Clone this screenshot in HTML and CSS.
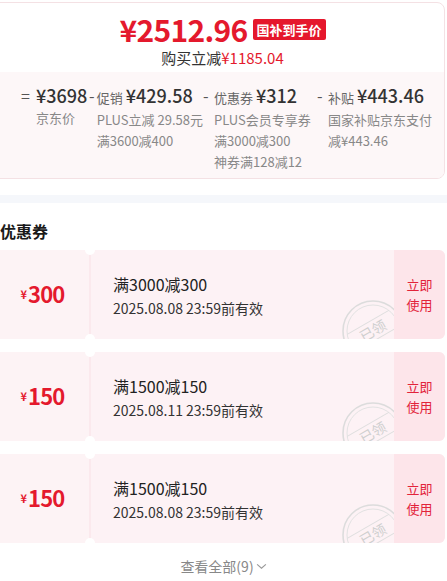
FILE: index.html
```html
<!DOCTYPE html>
<html lang="zh-CN">
<head>
    <meta charset="UTF-8">
    <meta name="viewport" content="width=device-width, initial-scale=1.0">
    <title>国补到手价</title>
    <link rel="stylesheet" href="styles.css">
</head>
<body>

    <div class="price-card">
        <div class="price-top">
            <div class="final-line">
                <span class="final-price">¥2512.96</span>
                <span class="final-tag">国补到手价</span>
            </div>
            <div class="save-line">购买立减<span class="red">¥1185.04</span></div>
        </div>

        <div class="breakdown">
            <div class="col col-1">
                <span class="sign">=</span>
                <div class="col-body">
                    <div class="head"><span class="amount">¥3698</span></div>
                    <div class="sub">京东价</div>
                </div>
            </div>
            <div class="col col-2">
                <span class="sign">-</span>
                <div class="col-body">
                    <div class="head"><span class="label">促销</span><span class="amount">¥429.58</span></div>
                    <div class="sub">PLUS立减 29.58元</div>
                    <div class="sub">满3600减400</div>
                </div>
            </div>
            <div class="col col-3">
                <span class="sign">-</span>
                <div class="col-body">
                    <div class="head"><span class="label">优惠券</span><span class="amount">¥312</span></div>
                    <div class="sub">PLUS会员专享券</div>
                    <div class="sub">满3000减300</div>
                    <div class="sub">神券满128减12</div>
                </div>
            </div>
            <div class="col col-4">
                <span class="sign">-</span>
                <div class="col-body">
                    <div class="head"><span class="label">补贴</span><span class="amount">¥443.46</span></div>
                    <div class="sub">国家补贴京东支付</div>
                    <div class="sub">减¥443.46</div>
                </div>
            </div>
        </div>
    </div>

    <div class="band"></div>

    <h2 class="section-title">优惠券</h2>

    <div class="coupons">
        <div class="coupon">
            <div class="coupon-left"><span class="yen">¥</span><span class="value">300</span></div>
            <div class="coupon-mid">
                <div class="rule">满3000减300</div>
                <div class="expire">2025.08.08 23:59前有效</div>
                <svg class="stamp" viewBox="0 0 64 64" width="64" height="64">
                    <circle cx="32" cy="32" r="30" fill="none" stroke="#dcdcdc" stroke-width="1.6"/>
                    <circle cx="32" cy="32" r="26" fill="none" stroke="#e2e2e2" stroke-width="1"/>
                    <g transform="rotate(-30 32 32)">
                        <line x1="8" y1="22" x2="56" y2="22" stroke="#dedede" stroke-width="1"/>
                        <line x1="8" y1="41" x2="56" y2="41" stroke="#dedede" stroke-width="1"/>
                        <text x="32" y="37" text-anchor="middle" class="stamp-text">已领</text>
                    </g>
                </svg>
            </div>
            <div class="coupon-right">立即<br>使用</div>
        </div>

        <div class="coupon">
            <div class="coupon-left"><span class="yen">¥</span><span class="value">150</span></div>
            <div class="coupon-mid">
                <div class="rule">满1500减150</div>
                <div class="expire">2025.08.11 23:59前有效</div>
                <svg class="stamp" viewBox="0 0 64 64" width="64" height="64">
                    <circle cx="32" cy="32" r="30" fill="none" stroke="#dcdcdc" stroke-width="1.6"/>
                    <circle cx="32" cy="32" r="26" fill="none" stroke="#e2e2e2" stroke-width="1"/>
                    <g transform="rotate(-30 32 32)">
                        <line x1="8" y1="22" x2="56" y2="22" stroke="#dedede" stroke-width="1"/>
                        <line x1="8" y1="41" x2="56" y2="41" stroke="#dedede" stroke-width="1"/>
                        <text x="32" y="37" text-anchor="middle" class="stamp-text">已领</text>
                    </g>
                </svg>
            </div>
            <div class="coupon-right">立即<br>使用</div>
        </div>

        <div class="coupon">
            <div class="coupon-left"><span class="yen">¥</span><span class="value">150</span></div>
            <div class="coupon-mid">
                <div class="rule">满1500减150</div>
                <div class="expire">2025.08.08 23:59前有效</div>
                <svg class="stamp" viewBox="0 0 64 64" width="64" height="64">
                    <circle cx="32" cy="32" r="30" fill="none" stroke="#dcdcdc" stroke-width="1.6"/>
                    <circle cx="32" cy="32" r="26" fill="none" stroke="#e2e2e2" stroke-width="1"/>
                    <g transform="rotate(-30 32 32)">
                        <line x1="8" y1="22" x2="56" y2="22" stroke="#dedede" stroke-width="1"/>
                        <line x1="8" y1="41" x2="56" y2="41" stroke="#dedede" stroke-width="1"/>
                        <text x="32" y="37" text-anchor="middle" class="stamp-text">已领</text>
                    </g>
                </svg>
            </div>
            <div class="coupon-right">立即<br>使用</div>
        </div>
    </div>

    <div class="more">
        查看全部(9)
        <svg class="chevron" viewBox="0 0 12 8" width="11" height="7">
            <path d="M1 1.5 L6 6 L11 1.5" fill="none" stroke="#999" stroke-width="1.3"/>
        </svg>
    </div>

</body>
</html>
```

FILE: styles.css
```css
body {
    margin: 0;
    font-family: "Noto Sans CJK SC", "Noto Sans", sans-serif;
    color: #333;
    background-color: #fff;
    overflow: hidden;
}
.red {
    color: #e4192d;
}

/* price summary card */
.price-card {
    margin: 2px 2px 0 -8px;
    height: 177px;
    box-sizing: border-box;
    border: 1px solid #f4e1e4;
    border-radius: 8px;
    overflow: hidden;
    display: flex;
    flex-direction: column;
}
.price-top {
    height: 69px;
    padding-top: 9px;
    box-sizing: border-box;
    text-align: center;
    padding-left: 8px;
}
.final-line {
    display: flex;
    justify-content: center;
    align-items: center;
    height: 34px;
}
.final-price {
    color: #e4192d;
    font-size: 30px;
    font-weight: 700;
    letter-spacing: -0.7px;
    line-height: 34px;
}
.final-tag {
    margin-left: 5px;
    background-color: #e5172c;
    color: #fff;
    font-size: 13px;
    font-weight: 700;
    line-height: 21px;
    padding: 0 4px;
    border-radius: 2px;
}
.save-line {
    margin-top: 3px;
    font-size: 15px;
    line-height: 18px;
}
.breakdown {
    flex: 1;
    background-color: #fdf7f8;
    display: grid;
    grid-template-columns: 68px 114px 114px 1fr;
    padding: 12px 0 0 28px;
}
.col {
    display: flex;
}
.sign {
    width: 11px;
    font-size: 16px;
    line-height: 22px;
    color: #555;
}
.col-1 .sign {
    width: 15px;
}
.head {
    line-height: 22px;
    white-space: nowrap;
}
.label {
    font-size: 13px;
    color: #666;
    margin-right: 3px;
}
.amount {
    font-size: 18px;
    font-weight: 500;
    color: #333;
}
.sub {
    font-size: 13px;
    line-height: 21px;
    color: #888;
    white-space: nowrap;
}

.band {
    margin-top: 16px;
    height: 8px;
    background-color: #f5f7fb;
}
.section-title {
    margin: 17px 0 8px 0;
    font-size: 16px;
    font-weight: 700;
    line-height: 22px;
    color: #1a1a1a;
}

/* coupon list */
.coupons {
    display: flex;
    flex-direction: column;
    gap: 13px;
    margin: 0 2px 0 -8px;
}
.coupon {
    display: flex;
    height: 89px;
    border-radius: 6px;
    overflow: hidden;
    background-color: #fdf2f5;
}
.coupon-left {
    width: 99px;
    position: relative;
    display: flex;
    justify-content: center;
    align-items: center;
    padding: 0 0 4px 4px;
    box-sizing: border-box;
    color: #e4192d;
    background-color: #fdf3f5;
    border-right: 2px solid #fbe9ed;
}
.coupon-left::before,
.coupon-left::after {
    content: "";
    position: absolute;
    right: -6px;
    width: 10px;
    height: 10px;
    border-radius: 50%;
    background-color: #fff;
}
.coupon-left::before {
    top: -5px;
}
.coupon-left::after {
    bottom: -5px;
}
.yen {
    font-size: 11px;
    font-weight: 700;
    margin-right: 1px;
    padding-top: 3px;
}
.value {
    font-size: 22px;
    font-weight: 700;
    letter-spacing: -0.8px;
    line-height: 28px;
}
.coupon-mid {
    flex: 1;
    position: relative;
    overflow: hidden;
    padding: 23px 0 0 22px;
}
.rule {
    font-size: 16px;
    line-height: 22px;
    color: #222;
}
.expire {
    margin-top: 3px;
    font-size: 14px;
    line-height: 20px;
    color: #333;
}
.stamp {
    position: absolute;
    top: 49px;
    right: -11px;
}
.stamp-text {
    font-size: 14px;
    fill: #cfcfcf;
    font-family: "Noto Sans CJK SC", sans-serif;
}
.coupon-right {
    width: 51px;
    display: flex;
    align-items: center;
    justify-content: center;
    text-align: center;
    background-color: #fde5ea;
    color: #e2233a;
    font-size: 13px;
    line-height: 20px;
}

.more {
    margin-top: 12px;
    display: flex;
    justify-content: center;
    align-items: center;
    font-size: 14px;
    line-height: 22px;
    color: #888;
}
.chevron {
    margin-left: 2px;
}
```
